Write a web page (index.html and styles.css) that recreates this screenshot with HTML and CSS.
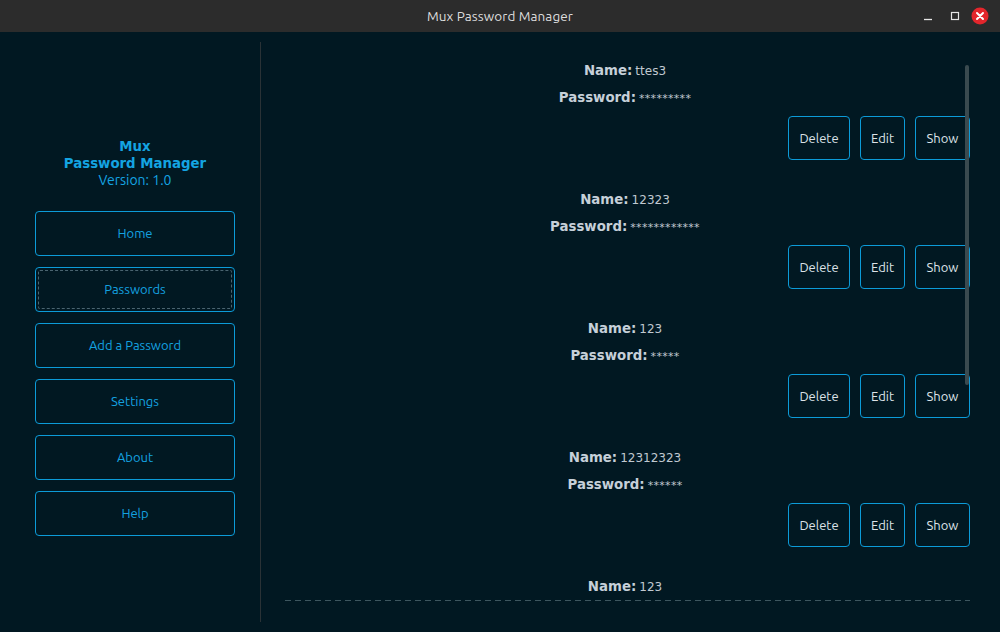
FILE: index.html
```html
<!DOCTYPE html>
<html>
<head>
<meta charset="utf-8">
<link rel="stylesheet" href="styles.css">
</head>
<body>
<div class="window">
  <header class="titlebar">
    <span class="title">Mux Password Manager</span>
    <div class="controls">
      <svg class="ctl min" width="12" height="12" viewBox="0 0 12 12"><path d="M2 9.5h8" stroke="#e6e6e6" stroke-width="1.3"/></svg>
      <svg class="ctl max" width="12" height="12" viewBox="0 0 12 12"><rect x="2.5" y="2.5" width="7" height="7" fill="none" stroke="#e6e6e6" stroke-width="1.2"/></svg>
      <svg class="ctl close" width="18" height="18" viewBox="0 0 18 18"><circle cx="9" cy="9" r="8.5" fill="#e3262c"/><path d="M6 6l6 6M12 6l-6 6" stroke="#fff" stroke-width="2" stroke-linecap="round"/></svg>
    </div>
  </header>
  <div class="main">
    <aside class="sidebar">
      <div class="brand">
        <div class="brand-name">Mux</div>
        <div class="brand-name">Password Manager</div>
        <div class="version">Version: 1.0</div>
      </div>
      <nav class="nav">
        <button class="nav-btn">Home</button>
        <button class="nav-btn focused">Passwords</button>
        <button class="nav-btn">Add a Password</button>
        <button class="nav-btn">Settings</button>
        <button class="nav-btn">About</button>
        <button class="nav-btn">Help</button>
      </nav>
    </aside>
    <div class="divider"></div>
    <section class="content">
      <div class="list">
        <div class="entry">
          <div class="row"><span class="label">Name:</span><span class="value">ttes3</span></div>
          <div class="row"><span class="label">Password:</span><span class="value stars">*********</span></div>
          <div class="actions"><button class="act del">Delete</button><button class="act edit">Edit</button><button class="act show">Show</button></div>
        </div>
        <div class="entry">
          <div class="row"><span class="label">Name:</span><span class="value">12323</span></div>
          <div class="row"><span class="label">Password:</span><span class="value stars">************</span></div>
          <div class="actions"><button class="act del">Delete</button><button class="act edit">Edit</button><button class="act show">Show</button></div>
        </div>
        <div class="entry">
          <div class="row"><span class="label">Name:</span><span class="value">123</span></div>
          <div class="row"><span class="label">Password:</span><span class="value stars">*****</span></div>
          <div class="actions"><button class="act del">Delete</button><button class="act edit">Edit</button><button class="act show">Show</button></div>
        </div>
        <div class="entry">
          <div class="row"><span class="label">Name:</span><span class="value">12312323</span></div>
          <div class="row"><span class="label">Password:</span><span class="value stars">******</span></div>
          <div class="actions"><button class="act del">Delete</button><button class="act edit">Edit</button><button class="act show">Show</button></div>
        </div>
        <div class="entry last">
          <div class="row"><span class="label">Name:</span><span class="value">123</span></div>
        </div>
      </div>
      <div class="scrollbar"></div>
    </section>
  </div>
</div>
</body>
</html>
```

FILE: styles.css
```css
* { box-sizing: border-box; }
html, body { margin: 0; padding: 0; }
body {
  width: 1000px;
  height: 632px;
  overflow: hidden;
  background: #011822;
  font-family: "DejaVu Sans", sans-serif;
}
.window { display: flex; flex-direction: column; height: 632px; }

.titlebar {
  height: 32px;
  flex: none;
  background: #2c2c2c;
  position: relative;
  display: flex;
  align-items: center;
  justify-content: center;
}
.title {
  color: #dedede;
  font-family: "Ubuntu", "Noto Sans", sans-serif;
  font-size: 13.5px;
  letter-spacing: 0.1px;
}
.controls {
  position: absolute;
  right: 11px;
  top: 7px;
  display: flex;
  align-items: center;
}
.ctl { display: block; }
.ctl.min { margin-right: 15px; }
.ctl.max { margin-right: 10px; }

.main { flex: 1; display: flex; min-height: 0; }

.sidebar {
  width: 260px;
  flex: none;
  padding: 106px 0 0 35px;
}
.brand {
  width: 200px;
  text-align: center;
  color: #14a4e2;
  font-size: 13.33px;
  line-height: 17px;
}
.brand-name { font-weight: bold; }
.version { font-family: "Ubuntu", "Noto Sans", sans-serif; font-size: 14px; }
.nav {
  margin-top: 22px;
  display: flex;
  flex-direction: column;
  gap: 11px;
}
.nav-btn {
  width: 200px;
  height: 45px;
  background: transparent;
  border: 1px solid #0c9bd8;
  border-radius: 4px;
  color: #14a2e0;
  font-family: "Ubuntu", "Noto Sans", sans-serif;
  font-size: 13px;
  line-height: 16px;
  padding: 0 0 2px;
  position: relative;
}
.nav-btn.focused::after {
  content: "";
  position: absolute;
  inset: 2px;
  border: 1px dashed #4a6470;
  border-radius: 2px;
}

.divider {
  width: 1px;
  flex: none;
  background: #2a3236;
  margin: 10px 0;
}

.content {
  flex: 1;
  position: relative;
  padding: 0 30px 0 24px;
}
.list {
  height: 569px;
  overflow: hidden;
  padding-top: 28px;
  background-image: repeating-linear-gradient(to right, #3d565f 0 6px, transparent 6px 10px);
  background-size: 100% 1px;
  background-repeat: no-repeat;
  background-position: left bottom;
}
.entry {
  height: 129px;
  display: flex;
  flex-direction: column;
}
.entry.last { height: 30px; }
.row {
  text-align: center;
  line-height: 20px;
  height: 20px;
  padding-right: 5px;
  color: #c6d0d9;
  white-space: nowrap;
}
.row + .row { margin-top: 7px; }
.label { font-weight: bold; font-size: 13.33px; }
.value { font-size: 12px; color: #c0c9d1; margin-left: 3px; }
.stars { font-size: 11px; letter-spacing: 0.3px; }

.actions {
  margin-top: 9px;
  display: flex;
  justify-content: flex-end;
  gap: 10px;
}
.act {
  height: 44px;
  background: transparent;
  border: 1px solid #0c9bd8;
  border-radius: 4px;
  color: #dde3e8;
  font-family: "Ubuntu", "Noto Sans", sans-serif;
  font-size: 13px;
  padding: 0;
}
.act.del { width: 62px; }
.act.edit { width: 45px; }
.act.show { width: 55px; }

.scrollbar {
  position: absolute;
  left: 704px;
  top: 33px;
  width: 4px;
  height: 320px;
  border-radius: 2px;
  background: #3a4a4f;
}
```
